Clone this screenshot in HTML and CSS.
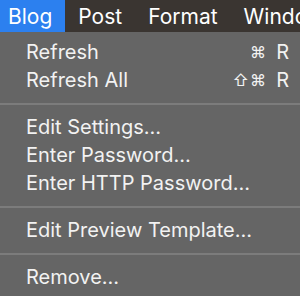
FILE: index.html
```html
<!DOCTYPE html>
<html lang="en">
<head>
  <meta charset="UTF-8" />
  <title>Blog menu</title>
  <link rel="stylesheet" href="styles.css">
</head>
<body>

  <!-- Menu bar -->
  <div class="menubar">
    <span class="menubar-item active">Blog</span>
    <span class="menubar-item">Post</span>
    <span class="menubar-item">Format</span>
    <span class="menubar-item">Window</span>
  </div>

  <!-- Blog dropdown -->
  <div class="menu">
    <div class="menu-item">
      <span class="label">Refresh</span>
      <span class="shortcut"><span class="mod">⌘</span>R</span>
    </div>
    <div class="menu-item">
      <span class="label">Refresh All</span>
      <span class="shortcut"><span class="mod">⇧⌘</span>R</span>
    </div>
    <div class="separator"></div>
    <div class="menu-item"><span class="label">Edit Settings…</span></div>
    <div class="menu-item"><span class="label">Enter Password…</span></div>
    <div class="menu-item"><span class="label">Enter HTTP Password…</span></div>
    <div class="separator"></div>
    <div class="menu-item"><span class="label">Edit Preview Template…</span></div>
    <div class="separator"></div>
    <div class="menu-item"><span class="label">Remove…</span></div>
  </div>

</body>
</html>
```

FILE: styles.css
```css
:root {
  --bar-bg: #3a3531;
  --highlight: #2c80ef;
  --menu-bg: #656565;
  --separator: #7c7c7c;
  --text: #f2f2f2;
}

* {
  box-sizing: border-box;
  margin: 0;
  padding: 0;
}

body {
  font-family: 'Inter', 'Liberation Sans', sans-serif;
  background: var(--menu-bg);
  color: var(--text);
  width: 300px;
  height: 296px;
  overflow: hidden;
}

/* Menu bar */
.menubar {
  display: flex;
  height: 32px;
  background: var(--bar-bg);
  white-space: nowrap;
  overflow: hidden;
}

.menubar-item {
  display: flex;
  align-items: center;
  padding: 0 13px;
  font-size: 21px;
  color: #ffffff;
}

.menubar-item.active {
  background: var(--highlight);
  padding: 0 13px 0 8px;
}

/* Dropdown */
.menu {
  padding-top: 6px;
}

.menu-item {
  display: flex;
  align-items: center;
  justify-content: space-between;
  height: 28px;
  padding: 0 11px 0 26px;
  font-size: 20px;
  white-space: nowrap;
}

.shortcut {
  display: flex;
  align-items: center;
}

.mod {
  font-size: 16px;
  margin-right: 9px;
  letter-spacing: 1px;
}

.separator {
  height: 19px;
  display: flex;
  align-items: center;
}

.separator::before {
  content: "";
  display: block;
  width: 100%;
  height: 2px;
  background: var(--separator);
}
```
